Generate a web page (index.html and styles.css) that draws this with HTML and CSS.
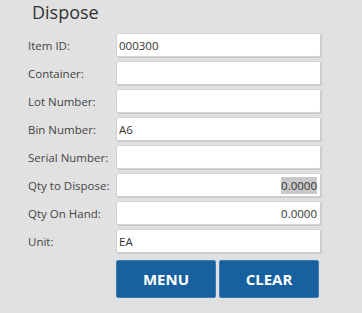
FILE: index.html
```html
<!DOCTYPE html>
<html lang="en">
<head>
    <meta charset="UTF-8">
    <meta name="viewport" content="width=device-width, initial-scale=1.0">
    <title>Dispose</title>
    <link rel="stylesheet" href="styles.css">
</head>
<body>
    <div class="page">
        <h1 class="title">Dispose</h1>

        <form class="form">
            <label for="item">Item ID:</label>
            <input id="item" type="text" value="000300">

            <label for="container">Container:</label>
            <input id="container" type="text">

            <label for="lot">Lot Number:</label>
            <input id="lot" type="text">

            <label for="bin">Bin Number:</label>
            <input id="bin" type="text" value="A6">

            <label for="serial">Serial Number:</label>
            <input id="serial" type="text">

            <label for="qty">Qty to Dispose:</label>
            <div class="field num">
                <span class="selected">0.0000</span>
            </div>

            <label for="onhand">Qty On Hand:</label>
            <input id="onhand" class="num" type="text" value="0.0000">

            <label for="unit">Unit:</label>
            <input id="unit" type="text" value="EA">

            <div class="buttons">
                <button type="button" class="btn">MENU</button>
                <button type="button" class="btn">CLEAR</button>
            </div>
        </form>
    </div>
</body>
</html>
```

FILE: styles.css
```css
body {
    margin: 0;
    background-color: #e1e1e1;
    font-family: "Open Sans", Arial, sans-serif;
    color: #333;
}

.page {
    padding: 1px 0 0 28px;
}

.title {
    margin: 0 0 10px 4px;
    font-size: 18px;
    line-height: 22px;
    font-weight: normal;
    color: #333;
}

.form {
    display: grid;
    grid-template-columns: 88px 205px;
    row-gap: 4px;
    align-items: center;
}

.form label {
    font-size: 11.5px;
    color: #444;
}

.form input,
.form .field {
    box-sizing: border-box;
    height: 24px;
    margin: 0;
    padding: 0 3px 0 2px;
    border: 1px solid #d2d2d2;
    border-radius: 2px;
    box-shadow: 1px 1px 0 #c8c8c8;
    background-color: #fff;
    font-family: inherit;
    font-size: 11.5px;
    color: #333;
    outline: none;
}

.form .field {
    display: flex;
    align-items: center;
    justify-content: flex-end;
}

.form .num {
    text-align: right;
}

.selected {
    background-color: #c9c9c9;
    padding: 1px 0;
}

.buttons {
    grid-column: 2;
    display: flex;
    gap: 3px;
    margin-top: 3px;
}

.btn {
    width: 100px;
    height: 38px;
    border: 1px solid #3d7db3;
    border-radius: 2px;
    background-color: #17619f;
    color: #fff;
    font-family: inherit;
    font-size: 15px;
    font-weight: bold;
    cursor: pointer;
}
```
